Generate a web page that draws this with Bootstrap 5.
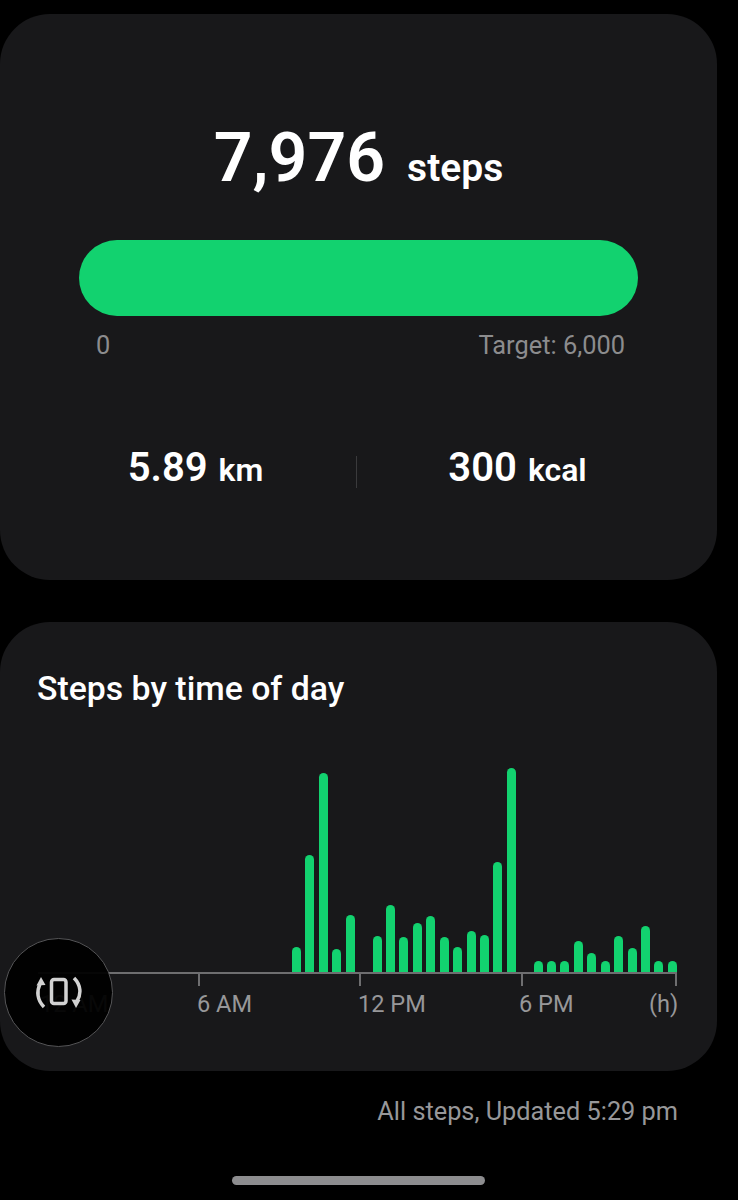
<!DOCTYPE html>
<html lang="en">
<head>
    <meta charset="UTF-8">
    <meta name="viewport" content="width=device-width, initial-scale=1.0">
    <title>Steps</title>
    <link href="https://cdn.jsdelivr.net/npm/bootstrap@5.3.0/dist/css/bootstrap.min.css" rel="stylesheet">
    <style>
        html, body {
            height: 1200px;
            overflow: hidden;
        }
        body {
            background-color: #000000;
            font-family: Roboto, "Liberation Sans", sans-serif;
            color: #ffffff;
            padding: 14px 21px 0 0;
        }
        .panel {
            background-color: #18181a;
            border-radius: 50px;
        }
        .panel-summary {
            height: 566px;
            padding: 106px 79px 0;
        }
        .panel-chart {
            height: 449px;
            margin-top: 42px;
            padding: 49px 40px 0 38px;
        }
        .total-num {
            font-size: 68px;
            font-weight: 600;
            line-height: 76px;
        }
        .total-unit {
            font-size: 39px;
            font-weight: 600;
            margin-left: 22px;
        }
        .goal-bar {
            height: 76px;
            margin-top: 42px;
            background-color: #12d26f;
            border-radius: 38px;
        }
        .goal-labels {
            color: #8c8c8e;
            font-size: 25.4px;
            line-height: 30px;
            margin-top: 14px;
            padding: 0 13px 0 17px;
        }
        .stat-row {
            margin: 85px -40px 0 -44px;
        }
        .stat-item {
            flex: 1 1 0;
            font-weight: 600;
            line-height: 46px;
        }
        .stat-num {
            font-size: 40px;
        }
        .stat-unit {
            font-size: 32px;
            margin-left: 11px;
        }
        .stat-line {
            width: 1px;
            height: 32px;
            background-color: #3a3a3c;
        }
        .chart-title {
            font-size: 33.8px;
            font-weight: 500;
            line-height: 36px;
            margin-left: -1px;
        }
        .bars {
            height: 210px;
            margin-top: 55px;
            margin-left: -1px;
            gap: 4.43px;
        }
        .bar {
            width: 9px;
            flex: none;
            background-color: #12d26f;
            border-radius: 4.5px 4.5px 0 0;
        }
        .axis {
            height: 14px;
            border-top: 2px solid #6e6e70;
            position: relative;
        }
        .tick {
            position: absolute;
            top: 0;
            width: 2px;
            height: 12px;
            background-color: #6e6e70;
        }
        .axis-labels {
            position: relative;
            height: 30px;
            margin-top: 3px;
            color: #979799;
            font-size: 23.6px;
            line-height: 30px;
        }
        .axis-labels span {
            position: absolute;
            top: 0;
        }
        .updated {
            color: #979799;
            font-size: 25.3px;
            line-height: 30px;
            margin-top: 26px;
            padding-right: 39px;
        }
        .rotate-btn {
            position: absolute;
            left: 4px;
            top: 938px;
            width: 109px;
            height: 109px;
            background-color: rgba(0, 0, 0, 0.95);
            border: 1px solid #555557;
            border-radius: 50%;
        }
        .home-bar {
            position: absolute;
            left: 232px;
            top: 1176px;
            width: 253px;
            height: 9px;
            background-color: #8d8d8f;
            border-radius: 5px;
        }
    </style>
</head>
<body>
    <div class="panel panel-summary">
        <div class="d-flex justify-content-center align-items-baseline">
            <span class="total-num">7,976</span>
            <span class="total-unit">steps</span>
        </div>
        <div class="goal-bar"></div>
        <div class="goal-labels d-flex justify-content-between">
            <span>0</span>
            <span>Target: 6,000</span>
        </div>
        <div class="stat-row d-flex align-items-center">
            <div class="stat-item text-center"><span class="stat-num">5.89</span><span class="stat-unit">km</span></div>
            <div class="stat-line"></div>
            <div class="stat-item text-center"><span class="stat-num">300</span><span class="stat-unit">kcal</span></div>
        </div>
    </div>

    <div class="panel panel-chart">
        <div class="chart-title">Steps by time of day</div>
        <div class="bars d-flex align-items-end" id="bars"></div>
        <div class="axis">
            <div class="tick" style="left: 160px"></div>
            <div class="tick" style="left: 321px"></div>
            <div class="tick" style="left: 483px"></div>
            <div class="tick" style="left: 637px"></div>
        </div>
        <div class="axis-labels">
            <span style="left: 2px">12 AM</span>
            <span style="left: 159px">6 AM</span>
            <span style="left: 320px">12 PM</span>
            <span style="left: 481px">6 PM</span>
            <span style="left: 611px">(h)</span>
        </div>
    </div>

    <div class="updated text-end">All steps, Updated 5:29 pm</div>

    <div class="rotate-btn d-flex align-items-center justify-content-center">
        <svg width="47" height="33" viewBox="0 0 47 33" fill="none">
            <rect x="16.5" y="3.5" width="14.5" height="24" rx="2.5" stroke="#d2d2d2" stroke-width="3.5"/>
            <path d="M9 31 C2 24 1.5 15 5 8" stroke="#d2d2d2" stroke-width="3.5"/>
            <path d="M6 1 L1.5 9.5 L10.5 9 Z" fill="#d2d2d2"/>
            <path d="M39 2 C46 9 46.5 18 42 25" stroke="#d2d2d2" stroke-width="3.5"/>
            <path d="M41 32 L36.5 23.5 L45.5 24 Z" fill="#d2d2d2"/>
        </svg>
    </div>
    <div class="home-bar"></div>

    <script src="https://cdn.jsdelivr.net/npm/bootstrap@5.3.0/dist/js/bootstrap.bundle.min.js"></script>
    <script>
        // one value per half hour, in px above the axis
        const steps = [0,0,0,0,0,0,0,0,0,0,0,0,0,0,0,0,0,0,0,
            25,117,199,23,57,0,36,67,35,49,56,35,25,41,37,110,204,0,
            11,11,11,31,19,11,36,24,46,11,11];
        const barsEl = document.getElementById('bars');
        steps.forEach(function(h) {
            const bar = document.createElement('div');
            bar.className = 'bar';
            bar.style.height = h + 'px';
            barsEl.appendChild(bar);
        });
    </script>
</body>
</html>
